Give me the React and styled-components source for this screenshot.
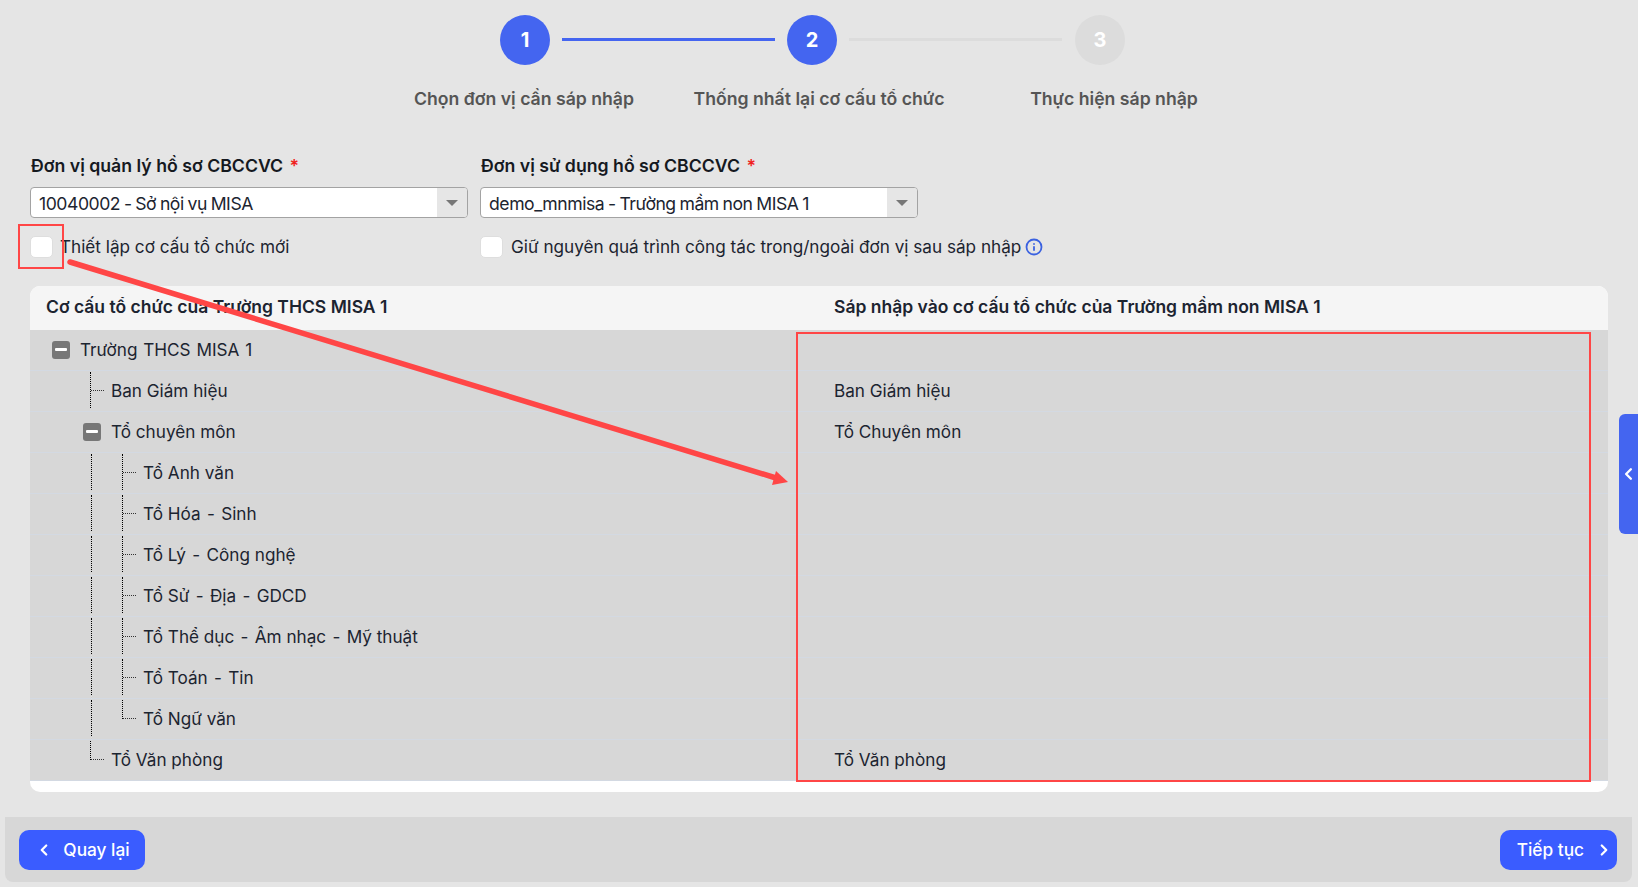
import React from "react";
import styled, { createGlobalStyle } from "styled-components";
import { ChevronLeft, ChevronRight, Info } from "lucide-react";

const Global = createGlobalStyle`
  html, body { margin: 0; padding: 0; background: #e5e5e5; overflow: hidden; }
  * { box-sizing: border-box; }
  body { font-family: Inter, "Noto Sans", sans-serif; color: #1c2430; }
`;

const Page = styled.div`
  position: relative;
  width: 1638px;
  height: 887px;
  padding-top: 15px;
  background: #e5e5e5;
`;

const StepTrack = styled.div`
  display: flex;
  align-items: center;
  padding-left: 500px;
  gap: 12px;
`;

const StepCircle = styled.div`
  width: 50px;
  height: 50px;
  border-radius: 50%;
  display: flex;
  align-items: center;
  justify-content: center;
  color: #fff;
  font-size: 20px;
  font-weight: 700;
  background: ${(p) => (p.$active ? "#4465f0" : "#dcdcdc")};
`;

const StepLine = styled.div`
  width: 213px;
  height: 3px;
  margin-bottom: 2px;
  margin-right: ${(p) => (p.$active ? 0 : 1)}px;
  background: ${(p) => (p.$active ? "#4465f0" : "#dcdcdc")};
`;

const StepLabels = styled.div`
  display: grid;
  grid-template-columns: repeat(3, 295px);
  justify-content: center;
  margin-top: 22px;
`;

const StepLabel = styled.div`
  text-align: center;
  font-size: 17.65px;
  line-height: 24px;
  font-weight: 600;
  color: #555555;
`;

const FormGrid = styled.div`
  display: grid;
  grid-template-columns: 438px 438px;
  column-gap: 12px;
  padding-left: 30px;
`;

const FieldLabels = styled(FormGrid)`
  margin-top: 43px;
`;

const FieldLabel = styled.div`
  padding-left: 1px;
  font-size: 17.7px;
  line-height: 24px;
  font-weight: 600;
  color: #15191f;
  span { color: #f01f1f; margin-left: 2px; }
`;

const Selects = styled(FormGrid)`
  margin-top: 9px;
`;

const Select = styled.div`
  display: flex;
  height: 31px;
  background: #fff;
  border: 1px solid #a3a3a3;
  border-radius: 4px;
  overflow: hidden;
`;

const SelectValue = styled.div`
  flex: 1;
  padding-left: 8px;
  font-size: 17.6px;
  line-height: 31px;
  letter-spacing: -0.45px;
  word-spacing: -0.75px;
  color: #1c2430;
  white-space: nowrap;
`;

const SelectArrow = styled.div`
  width: 30px;
  background: #e6e6e6;
  display: flex;
  align-items: center;
  justify-content: center;
  &::after {
    content: "";
    border-left: 6px solid transparent;
    border-right: 6px solid transparent;
    border-top: 6px solid #777;
  }
`;

const Checks = styled(FormGrid)`
  margin-top: 18px;
`;

const CheckRow = styled.div`
  display: flex;
  align-items: center;
  height: 22px;
  gap: ${(p) => p.$gap}px;
  font-size: 17.15px;
  color: #1c2430;
  white-space: nowrap;
`;

const CheckText = styled.span`
  margin-bottom: 2px;
`;

const CheckBox = styled.div`
  width: 23px;
  height: 22px;
  flex: none;
  border-radius: 5px;
  background: #fff;
  border: 1px solid #dedede;
`;

const InfoIcon = styled(Info)`
  margin-left: -4px;
  flex: none;
  color: #3b62e0;
`;

const Card = styled.div`
  margin: 28px 30px 0;
  height: 506px;
  width: 1578px;
  background: #fff;
  border-radius: 10px;
  overflow: hidden;
`;

const TableRow = styled.div`
  display: grid;
  grid-template-columns: 788px 1fr;
  align-items: center;
`;

const TableHead = styled(TableRow)`
  height: 44px;
  padding-bottom: 3px;
  background: #f5f5f5;
  font-size: 17.5px;
  font-weight: 600;
  color: #1c2430;
`;

const HeadCell = styled.div`
  padding-left: 16px;
`;

const BodyRow = styled(TableRow)`
  height: 41px;
  background: #d7d7d7;
  border-bottom: 1px solid #d3d9e2;
  font-size: 17.15px;
  color: #1c2430;
`;

const TreeCell = styled.div`
  display: flex;
  align-items: flex-start;
  height: 40px;
  padding-left: 20px;
`;

const TreeText = styled.div`
  line-height: 40px;
  white-space: nowrap;
  word-spacing: ${(p) => (p.$root ? "1px" : "0")};
`;

const Dash = styled.span`
  margin: 0 1.5px;
`;

const Unit = styled.div`
  width: ${(p) => p.$w}px;
  height: 40px;
  flex: none;
  position: relative;
`;

const Toggle = styled.div`
  position: absolute;
  left: ${(p) => p.$left}px;
  top: 11px;
  width: 18px;
  height: 18px;
  border-radius: 3px;
  background: #777777;
  &::after {
    content: "";
    position: absolute;
    left: 3px;
    right: 3px;
    top: 7px;
    height: 3px;
    border-radius: 1px;
    background: #fff;
  }
`;

const VLine = styled.div`
  position: absolute;
  left: ${(p) => p.$left}px;
  top: 1px;
  width: 0;
  height: ${(p) => (p.$last ? 19 : 36)}px;
  border-left: 1px dotted #000;
`;

const HLine = styled.div`
  position: absolute;
  left: 11px;
  top: 19px;
  width: 13px;
  height: 0;
  border-top: 1px dotted #333;
`;

const RightCell = styled.div`
  padding-left: 16px;
  line-height: 40px;
  height: 40px;
`;

const Footer = styled.div`
  position: absolute;
  left: 5px;
  right: 6px;
  bottom: 5px;
  height: 65px;
  padding: 13px 15px 0 14px;
  display: flex;
  align-items: flex-start;
  justify-content: space-between;
  background: #d7d7d7;
  border-radius: 0 0 8px 8px;
`;

const NavButton = styled.button`
  height: 40px;
  width: ${(p) => p.$w}px;
  border: 0;
  border-radius: 10px;
  background: #3a5cff;
  color: #fff;
  font-family: inherit;
  font-size: 17.3px;
  font-weight: 500;
  display: flex;
  align-items: center;
  justify-content: ${(p) => (p.$end ? "flex-end" : "center")};
  gap: ${(p) => p.$gap}px;
  padding: ${(p) => (p.$end ? "0 4px 0 0" : "0 0 0 1px")};
`;

const NavText = styled.span`
  margin-bottom: 1px;
`;

const Handle = styled.div`
  position: absolute;
  left: 1619px;
  top: 414px;
  width: 19px;
  height: 120px;
  background: #4465f0;
  border-radius: 6px 0 0 6px;
  color: #fff;
  display: flex;
  align-items: center;
  justify-content: center;
`;

const Overlay = styled.svg`
  position: absolute;
  inset: 0;
  pointer-events: none;
`;

const rows = [
  { name: "Trường THCS MISA 1", right: "", level: 0, toggle: true },
  { name: "Ban Giám hiệu", right: "Ban Giám hiệu", level: 1 },
  { name: "Tổ chuyên môn", right: "Tổ Chuyên môn", level: 1, toggle: true },
  { name: "Tổ Anh văn", level: 2 },
  { name: "Tổ Hóa - Sinh", level: 2 },
  { name: "Tổ Lý - Công nghệ", level: 2 },
  { name: "Tổ Sử - Địa - GDCD", level: 2 },
  { name: "Tổ Thể dục - Âm nhạc - Mỹ thuật", level: 2 },
  { name: "Tổ Toán - Tin", level: 2 },
  { name: "Tổ Ngữ văn", level: 2, last: true },
  { name: "Tổ Văn phòng", right: "Tổ Văn phòng", level: 1, last: true },
];

function TreeName({ name }) {
  const parts = name.split(" - ");
  return parts.map((part, i) => (
    <React.Fragment key={part}>
      {i > 0 && <Dash> - </Dash>}
      {part}
    </React.Fragment>
  ));
}

function TreeRow({ row }) {
  return (
    <BodyRow>
      <TreeCell>
        {row.level > 0 && <Unit $w={30} />}
        {row.level === 2 && (
          <Unit $w={32}>
            <VLine $left={11} />
          </Unit>
        )}
        <Unit $w={row.level === 0 ? 30 : 31}>
          {row.toggle ? (
            <Toggle $left={row.level === 0 ? 2 : 3} />
          ) : (
            <>
              <VLine $left={10} $last={row.last} />
              <HLine />
            </>
          )}
        </Unit>
        <TreeText $root={row.level === 0}>
          <TreeName name={row.name} />
        </TreeText>
      </TreeCell>
      <RightCell>{row.right}</RightCell>
    </BodyRow>
  );
}

export default function App() {
  return (
    <Page>
      <Global />
      <StepTrack>
        <StepCircle $active>1</StepCircle>
        <StepLine $active />
        <StepCircle $active>2</StepCircle>
        <StepLine />
        <StepCircle>3</StepCircle>
      </StepTrack>
      <StepLabels>
        <StepLabel>Chọn đơn vị cần sáp nhập</StepLabel>
        <StepLabel>Thống nhất lại cơ cấu tổ chức</StepLabel>
        <StepLabel>Thực hiện sáp nhập</StepLabel>
      </StepLabels>

      <FieldLabels>
        <FieldLabel>
          Đơn vị quản lý hồ sơ CBCCVC <span>*</span>
        </FieldLabel>
        <FieldLabel>
          Đơn vị sử dụng hồ sơ CBCCVC <span>*</span>
        </FieldLabel>
      </FieldLabels>
      <Selects>
        <Select>
          <SelectValue>10040002 - Sở nội vụ MISA</SelectValue>
          <SelectArrow />
        </Select>
        <Select>
          <SelectValue>demo_mnmisa - Trường mầm non MISA 1</SelectValue>
          <SelectArrow />
        </Select>
      </Selects>
      <Checks>
        <CheckRow $gap={7}>
          <CheckBox />
          <CheckText>Thiết lập cơ cấu tổ chức mới</CheckText>
        </CheckRow>
        <CheckRow $gap={8}>
          <CheckBox />
          <CheckText>Giữ nguyên quá trình công tác trong/ngoài đơn vị sau sáp nhập</CheckText>
          <InfoIcon size={18} strokeWidth={2.4} />
        </CheckRow>
      </Checks>

      <Card>
        <TableHead>
          <HeadCell>Cơ cấu tổ chức của Trường THCS MISA 1</HeadCell>
          <HeadCell>Sáp nhập vào cơ cấu tổ chức của Trường mầm non MISA 1</HeadCell>
        </TableHead>
        {rows.map((row) => (
          <TreeRow key={row.name} row={row} />
        ))}
      </Card>

      <Handle>
        <ChevronLeft size={20} strokeWidth={3} />
      </Handle>

      <Footer>
        <NavButton $w={126} $gap={10}>
          <ChevronLeft size={18} strokeWidth={3} />
          <NavText>Quay lại</NavText>
        </NavButton>
        <NavButton $w={117} $gap={11} $end>
          <NavText>Tiếp tục</NavText>
          <ChevronRight size={18} strokeWidth={3} />
        </NavButton>
      </Footer>

      <Overlay width="1638" height="887" viewBox="0 0 1638 887">
        <rect x="19" y="225" width="44" height="43" fill="none" stroke="#ff4646" strokeWidth="2" />
        <rect x="797" y="333" width="793" height="448" fill="none" stroke="#ff4646" strokeWidth="2" />
        <line x1="70" y1="262" x2="776" y2="478" stroke="#ff4646" strokeWidth="5.5" strokeLinecap="round" />
        <polygon points="788,482 772,485 776,471" fill="#ff4646" />
      </Overlay>
    </Page>
  );
}
